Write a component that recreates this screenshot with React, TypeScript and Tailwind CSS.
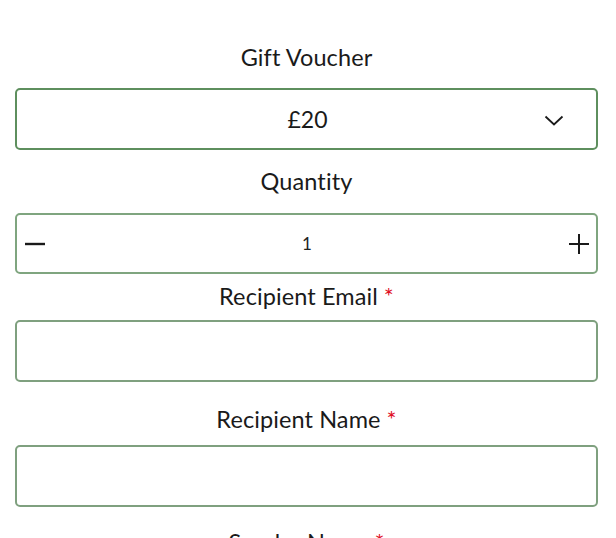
import React from "react";

const font = { fontFamily: "Lato, 'Noto Sans', sans-serif" };

function Label({ text, required, className = "" }: { text: string; required?: boolean; className?: string }) {
  return (
    <div className={`h-[28px] text-center text-[23.5px] leading-[28px] text-[#1a1a1a] tracking-[0.1px] ${className}`}>
      {text}
      {required && <span className="ml-[6px] text-[#e0101f]">*</span>}
    </div>
  );
}

export default function App() {
  return (
    <div className="w-[616px] h-[538px] overflow-hidden bg-white" style={font}>
      <div className="pl-[15px] pr-[18px] pt-[43px] flex flex-col">
        <Label text="Gift Voucher" />
        <div className="mt-[17px] h-[62px] rounded-[5px] border-2 border-[#5e8f5e] flex items-center relative">
          <div className="flex-1 text-center text-[23px] text-[#1a1a1a] pl-[2px]">£20</div>
          <svg className="absolute right-[32px] top-[23px]" width="20" height="14" viewBox="0 0 20 14" fill="none">
            <path d="M1.5 3.5 L10 11.5 L18.5 3.5" stroke="#1a1a1a" strokeWidth="1.8" />
          </svg>
        </div>

        <Label text="Quantity" className="mt-[17px]" />
        <div className="mt-[18px] h-[61px] rounded-[5px] border-2 border-[#7fa57f] flex items-center justify-between px-[8px]">
          <svg width="20" height="20" viewBox="0 0 20 20">
            <path d="M0 10 H20" stroke="#1a1a1a" strokeWidth="2.4" />
          </svg>
          <div className="text-[17px] text-[#222]">1</div>
          <svg width="20" height="20" viewBox="0 0 20 20" className="mr-[-1px]">
            <path d="M0 10 H20 M10 0 V20" stroke="#1a1a1a" strokeWidth="2" />
          </svg>
        </div>

        <Label text="Recipient Email" required className="mt-[8px]" />
        <div className="mt-[10px] h-[62px] rounded-[5px] border-2 border-[#7fa07f]" />

        <Label text="Recipient Name" required className="mt-[23px]" />
        <div className="mt-[12px] h-[62px] rounded-[5px] border-2 border-[#7fa07f]" />

        <Label text="Sender Name" required className="mt-[21px]" />
      </div>
    </div>
  );
}
